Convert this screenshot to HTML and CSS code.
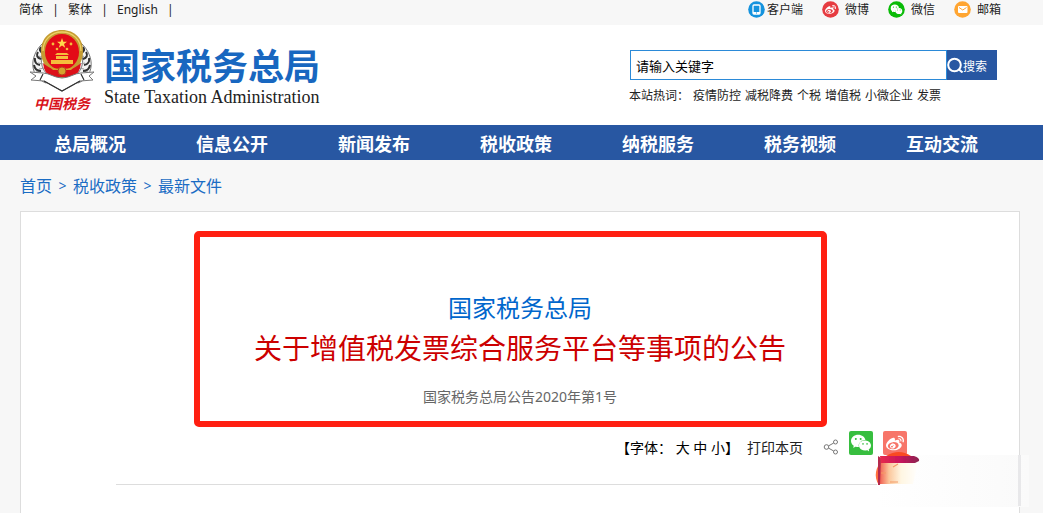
FILE: index.html
```html
<!DOCTYPE html>
<html lang="zh-CN">
<head>
<meta charset="utf-8">
<meta name="viewport" content="width=device-width, initial-scale=1">
<title>国家税务总局</title>
<link rel="stylesheet" href="styles.css">
</head>
<body>
<svg class="defs" aria-hidden="true">
  <symbol id="wechat" viewBox="0 0 24 24"><path d="M8.691 2.188C3.891 2.188 0 5.476 0 9.53c0 2.212 1.17 4.203 3.002 5.55a.59.59 0 0 1 .213.665l-.39 1.48c-.019.07-.048.141-.048.213 0 .163.13.295.29.295a.326.326 0 0 0 .167-.054l1.903-1.114a.864.864 0 0 1 .717-.098 10.16 10.16 0 0 0 2.837.403c.276 0 .543-.027.811-.05-.857-2.578.157-4.972 1.932-6.446 1.703-1.415 3.882-1.98 5.853-1.838-.576-3.583-4.196-6.348-8.596-6.348zM5.785 5.991c.642 0 1.162.529 1.162 1.18a1.17 1.17 0 0 1-1.162 1.178A1.17 1.17 0 0 1 4.623 7.17c0-.651.52-1.18 1.162-1.18zm5.813 0c.642 0 1.162.529 1.162 1.18a1.17 1.17 0 0 1-1.162 1.178 1.17 1.17 0 0 1-1.162-1.178c0-.651.52-1.18 1.162-1.18zm5.34 2.867c-1.797-.052-3.746.512-5.28 1.786-1.72 1.428-2.687 3.72-1.78 6.22.942 2.453 3.666 4.229 6.884 4.229.826 0 1.622-.12 2.361-.336a.722.722 0 0 1 .598.082l1.584.926a.272.272 0 0 0 .14.047c.134 0 .24-.111.24-.247 0-.06-.023-.12-.038-.177l-.327-1.233a.582.582 0 0 1-.023-.156.49.49 0 0 1 .201-.398C23.024 18.48 24 16.82 24 14.98c0-3.21-2.931-5.837-6.656-6.088V8.89c-.135-.01-.27-.027-.407-.03zm-2.53 3.274c.535 0 .969.44.969.982a.976.976 0 0 1-.969.983.976.976 0 0 1-.969-.983c0-.542.434-.982.97-.982zm4.844 0c.535 0 .969.44.969.982a.976.976 0 0 1-.969.983.976.976 0 0 1-.969-.983c0-.542.434-.982.969-.982z"/></symbol>
  <symbol id="weibo" viewBox="0 0 24 24"><path d="M10.098 20.323c-3.977.391-7.414-1.406-7.672-4.02-.259-2.609 2.759-5.047 6.74-5.441 3.979-.394 7.413 1.404 7.671 4.018.259 2.6-2.759 5.049-6.737 5.439l-.002.004zM9.05 17.219c-.384.616-1.208.884-1.829.602-.612-.279-.793-.991-.406-1.593.379-.595 1.176-.861 1.793-.601.622.263.82.972.442 1.592zm1.27-1.627c-.141.237-.449.353-.689.253-.236-.09-.313-.361-.177-.586.138-.227.436-.346.672-.24.239.09.315.36.18.601l.014-.028zm.176-2.719c-1.893-.493-4.033.45-4.857 2.118-.836 1.704-.026 3.591 1.886 4.21 1.983.64 4.318-.341 5.132-2.179.8-1.793-.201-3.642-2.161-4.149zm7.563-1.224c-.346-.105-.57-.18-.405-.615.375-.977.42-1.804 0-2.404-.781-1.112-2.915-1.053-5.364-.03 0 0-.766.331-.571-.271.376-1.217.315-2.224-.27-2.809-1.338-1.337-4.869.045-7.888 3.08C1.309 10.87 0 13.273 0 15.348c0 3.981 5.099 6.395 10.086 6.395 6.536 0 10.888-3.801 10.888-6.82 0-1.822-1.547-2.854-2.915-3.284v.01zm1.908-5.092c-.766-.856-1.908-1.187-2.96-.962-.436.09-.706.511-.616.932.09.42.511.691.932.602.511-.105 1.067.044 1.442.465.376.421.466.977.316 1.473-.136.406.089.856.51.992.405.119.857-.105.992-.512.33-1.021.12-2.178-.646-3.035l.03.045zm2.418-2.195c-1.576-1.757-3.905-2.419-6.054-1.968-.496.104-.812.587-.706 1.081.104.496.586.813 1.082.707 1.532-.331 3.185.15 4.296 1.383 1.112 1.246 1.429 2.943.947 4.416-.165.48.106 1.007.586 1.157.479.165.991-.104 1.157-.586.675-2.088.241-4.478-1.338-6.235l.03.045z"/></symbol>
</svg>

<div class="topbar">
  <div class="langs">
    <a href="#">简体</a><span>|</span><a href="#">繁体</a><span>|</span><a href="#">English</a><span>|</span>
  </div>
  <div class="channels">
    <a class="channel channel-app" href="#">
      <svg class="channel-icon" viewBox="0 0 17 17" aria-hidden="true"><circle cx="8.500" cy="8.500" r="8.300" fill="#1593de"/><rect x="5" y="4" width="7" height="9" rx="1" fill="#1593de" stroke="#fff" stroke-width="1.300"/><path d="M5 11h7v2H5z" fill="#fff"/><path d="M8 11.500h1v1H8z" fill="#1593de"/></svg>客户端</a>
    <a class="channel" href="#">
      <svg class="channel-icon" viewBox="0 0 17 17" aria-hidden="true"><circle cx="8.500" cy="8.500" r="8.300" fill="#e63c41"/><use href="#weibo" x="3" y="3" width="11" height="11" fill="#fff"/></svg>微博</a>
    <a class="channel" href="#">
      <svg class="channel-icon" viewBox="0 0 17 17" aria-hidden="true"><circle cx="8.500" cy="8.500" r="8.300" fill="#09bb07"/><use href="#wechat" x="2.500" y="2.500" width="12" height="12" fill="#fff"/></svg>微信</a>
    <a class="channel" href="#">
      <svg class="channel-icon" viewBox="0 0 17 17" aria-hidden="true"><circle cx="8.500" cy="8.500" r="8.300" fill="#ffa531"/><rect x="4" y="5" width="9.500" height="7" rx="1" fill="#fff"/><path d="M5 6.500l3.750 2.500 3.750-2.500" fill="none" stroke="#ffa531"/></svg>邮箱</a>
  </div>
</div>

<header class="masthead">
  <a class="brand" href="#">
    <span class="emblem">
      <svg class="emblem-art" viewBox="0 0 68 64" aria-hidden="true">
        <path d="M15 14C0 28 2 48 18 54l8-4C12 43 10 29 18 18zM53 14C68 28 66 48 50 54l-8-4C56 43 58 29 50 18z" fill="#f4f4f4" stroke="#555" stroke-width=".8"/>
        <path d="M13 18q-3 4 2 6m-5-1q-3 5 3 7m-6-1q-1 6 5 7m-6 0q1 6 7 6m-5 1q3 6 8 4M55 18q3 4-2 6m5-1q3 5-3 7m6-1q1 6-5 7m6 0q-1 6-7 6m5 1q-3 6-8 4" fill="none" stroke="#333" stroke-width="2"/>
        <path d="M14 20l4 4m-7 3l5 3m-6 4l5 1m-4 5l6-1m36-19l-4 4m7 3l-5 3m6 4l-5 1m4 5l-6-1" stroke="#999"/>
        <path d="M34 1c13 0 21 9 21 21 0 8-3 14-8 20l-13 8-13-8c-5-6-8-12-8-20C13 10 21 1 34 1z" fill="#c59c32"/>
        <path d="M15 22C15 11 23 3 34 3s19 8 19 19" fill="none" stroke="#ecd267" stroke-width="1.300"/>
        <ellipse cx="34" cy="23" rx="17" ry="18" fill="#e30b17"/>
        <path d="M15 34q6 5 10 6h18q4-1 10-6-1 10-8 14H23q-7-4-8-14z" fill="#dc1019"/>
        <path d="M34 9l1.300 3.700H39l-3 2.300 1.200 3.700-3.200-2.300-3.200 2.300L32 15l-3-2.300h3.700z" fill="#ffd84b"/>
        <g fill="#f5bd3c"><circle cx="25" cy="15" r="1.400"/><circle cx="43" cy="15" r="1.400"/><circle cx="29" cy="20" r="1.300"/><circle cx="39" cy="20" r="1.300"/><path d="M29 24h10l2 2H27zM28 27h12v3H28zM23 31h22v4H23z"/></g>
        <path d="M22 38q12 4 24 0l-3 3H25z" fill="#d5a22d"/>
        <circle cx="34" cy="42" r="4" fill="#d5a22d" stroke="#b5451c"/>
        <path d="M2 43l13 1c6 0 12 5 19 5s13-5 19-5l13-1-5 4 4 4-13 1-18 10-18-10-13-1 5-4z" fill="#fff" stroke="#777"/>
        <path d="M16 52l18 10 18-10M15 45l-3 6m41-6l3 6" fill="none" stroke="#333" stroke-width="1.200"/>
      </svg>
      <span class="emblem-name">中国税务</span>
    </span>
    <span class="brand-text">
      <span class="brand-cn">国家税务总局</span>
      <span class="brand-en">State Taxation Administration</span>
    </span>
  </a>
  <div class="search">
    <form class="search-form">
      <input class="search-input" type="text" value="请输入关键字" aria-label="请输入关键字">
      <button class="search-button" type="button"><svg class="search-icon" viewBox="0 0 16 16" aria-hidden="true"><circle cx="7.500" cy="8" r="6.300" fill="none" stroke="#fff" stroke-width="2"/><path d="M12 12.500l3.500 3" stroke="#fff" stroke-width="2"/></svg>搜索</button>
    </form>
    <div class="hotwords"><span>本站热词：</span><a href="#">疫情防控</a><a href="#">减税降费</a><a href="#">个税</a><a href="#">增值税</a><a href="#">小微企业</a><a href="#">发票</a></div>
  </div>
</header>

<nav class="mainnav">
  <a href="#">总局概况</a><a href="#">信息公开</a><a href="#">新闻发布</a><a href="#">税收政策</a><a href="#">纳税服务</a><a href="#">税务视频</a><a href="#">互动交流</a>
</nav>

<main class="page">
  <div class="crumbs"><a href="#">首页</a><span>&gt;</span><a href="#">税收政策</a><span>&gt;</span><a href="#">最新文件</a></div>
  <article class="panel">
    <div class="highlight"></div>
    <h1 class="title"><span class="title-org">国家税务总局</span><span class="title-main">关于增值税发票综合服务平台等事项的公告</span></h1>
    <p class="docnum">国家税务总局公告2020年第1号</p>
    <div class="tools">
      <div class="fontsize">【字体： <a href="#">大</a> <a href="#">中</a> <a href="#">小</a>】</div>
      <a class="print" href="#">打印本页</a>
      <svg class="share" viewBox="0 0 16 16" fill="none" stroke="#777" aria-hidden="true"><circle cx="3.500" cy="8" r="2.300"/><circle cx="12.500" cy="3" r="2"/><circle cx="12.500" cy="13" r="2"/><path d="M5.700 6.800l5-2.800M5.700 9.200l5 2.800"/></svg>
      <a class="badge badge-wechat" href="#" aria-label="微信"><svg viewBox="0 0 24 24"><use href="#wechat" x="2" y="2" width="20" height="20"/></svg></a>
      <a class="badge badge-weibo" href="#" aria-label="微博"><svg viewBox="0 0 24 24"><use href="#weibo" x="3" y="3" width="18" height="18"/></svg></a>
    </div>
    <hr class="rule">
    <svg class="smudge" viewBox="0 0 156 58" aria-hidden="true">
      <defs>
        <linearGradient id="veil"><stop offset="0" stop-color="#fff"/><stop offset="1" stop-color="#fafafa"/></linearGradient>
        <linearGradient id="glow"><stop offset="0" stop-color="#f0564a"/><stop offset=".25" stop-color="#fbc79c"/><stop offset=".55" stop-color="#fff6e2"/><stop offset="1" stop-color="#fff"/></linearGradient>
        <linearGradient id="bar"><stop offset="0" stop-color="#e62a4c"/><stop offset=".5" stop-color="#c9145c"/><stop offset="1" stop-color="#8c2450"/></linearGradient>
        <filter id="soft"><feGaussianBlur stdDeviation=".7"/></filter>
      </defs>
      <path d="M2 5h152v52H2z" fill="url(#veil)"/>
      <g filter="url(#soft)">
        <path d="M4 35C-2 27 1 16 7 11z" fill="#ff7041"/>
        <path d="M11 6Q24-2 36 6z" fill="#fa4a22"/>
        <path d="M4 10h40l-6 24H4z" fill="url(#glow)"/>
        <path d="M3 6l3 2-1 27H3z" fill="#b52a4e"/>
        <path d="M5 6h34q6 2 5 5l-4 2H6z" fill="url(#bar)"/>
        <path d="M6 23h5m7-6l5-3m-8 18h8" stroke="#f49b66" stroke-width="1.200"/>
      </g>
      <path d="M143 5h3v51h-3z" fill="#e8e8ea"/>
    </svg>
  </article>
</main>
</body>
</html>
```
FILE: styles.css
```css
* { box-sizing: border-box; }

body {
  margin: 0;
  min-height: 100vh;
  display: flex;
  flex-direction: column;
  background: #f7f7f7;
  color: #222;
  font: 12px/18px "Noto Sans", "Noto Sans CJK SC", sans-serif;
}

a { color: inherit; text-decoration: none; }

.defs { position: absolute; width: 0; height: 0; }

.topbar {
  display: flex;
  justify-content: space-between;
  height: 25px;
  padding: 0 42px 0 19px;
}

.langs { display: flex; line-height: 20px; }
.langs span { width: 25px; text-align: center; }

.channels { display: flex; gap: 19px; }
.channel { display: flex; align-items: center; gap: 6px; height: 19px; line-height: 19px; }
.channel-app { gap: 2px; }
.channel-icon { width: 17px; height: 17px; }

.masthead {
  display: flex;
  justify-content: space-between;
  height: 100px;
  padding: 0 46px 0 28px;
  background: #fff;
}

.brand { display: flex; gap: 8px; }
.emblem { display: flex; flex-direction: column; align-items: center; padding-top: 4px; }
.emblem-art { width: 68px; height: 64px; }
.emblem-name {
  color: #d9141c;
  font-size: 14px;
  font-weight: bold;
  font-style: italic;
  line-height: 22px;
}
.brand-text { display: flex; flex-direction: column; padding-top: 21px; }
.brand-cn { color: #1867c0; font-size: 36px; font-weight: bold; line-height: 42px; }
.brand-en { color: #222; font-family: "Liberation Serif", serif; font-size: 18px; line-height: 18px; }

.search { width: 368px; padding: 25px 0 0; }
.search-form { display: flex; margin-left: 1px; }
.search-input {
  flex: 1;
  min-width: 0;
  height: 30px;
  padding: 0 5px;
  border: 1px solid #2b8ad8;
  background: #fff;
  color: #000;
  font: 13px "Noto Sans CJK SC", sans-serif;
}
.search-button {
  display: flex;
  align-items: center;
  width: 50px;
  height: 30px;
  padding: 0;
  border: 0;
  background: #2857a2;
  color: #fff;
  font: 12px "Noto Sans CJK SC", sans-serif;
}
.search-icon { width: 16px; height: 16px; }
.hotwords { display: flex; gap: 4px; margin-top: 7px; white-space: nowrap; }

.mainnav {
  display: grid;
  grid-template-columns: repeat(7, 1fr);
  padding: 0 30px 0 19px;
  background: #2857a2;
  color: #fff;
  font-size: 18px;
  font-weight: bold;
  text-align: center;
}
.mainnav a { height: 35px; line-height: 38px; }

.page {
  flex: 1;
  display: flex;
  flex-direction: column;
  padding: 0 23px 0 20px;
}
.crumbs { display: flex; height: 51px; color: #1a6cc4; font-size: 16px; line-height: 52px; }
.crumbs span { width: 21px; text-align: center; font-size: 14px; }

.panel {
  position: relative;
  flex: 1;
  padding: 76px 95px 0;
  border: 1px solid #ddd;
  border-bottom: 0;
  background: #fff;
}
.highlight {
  position: absolute;
  top: 19px;
  left: 173px;
  right: 192px;
  height: 196px;
  border: 6px solid #ff1f11;
  border-radius: 5px;
}
.title { margin: 0; font-weight: normal; text-align: center; }
.title span { display: block; line-height: 40px; }
.title-org { color: #06c; font-size: 24px; }
.title-main { color: #c00; font-size: 28px; }
.docnum { margin: 19px 0 0; color: #666; font-size: 14px; line-height: 20px; text-align: center; }

.tools {
  display: flex;
  justify-content: flex-end;
  margin: 24px 17px 0 0;
  font-size: 14px;
  line-height: 34px;
  height: 24px;
}
.fontsize { color: #000; }
.print { margin: 0 20px 0 8px; }
.share { width: 16px; height: 16px; margin: 8px 10px 0 0; }
.badge { width: 24px; height: 24px; border-radius: 2px; fill: #fff; }
.badge svg { display: block; }
.badge-wechat { margin-right: 10px; background: #37be3f; }
.badge-weibo { background: #f77569; }

.rule { margin: 29px 0 0; border: 0; border-top: 1px solid #ddd; }

.smudge {
  position: absolute;
  top: 238px;
  right: -12px;
  width: 156px;
  height: 58px;
}
```
